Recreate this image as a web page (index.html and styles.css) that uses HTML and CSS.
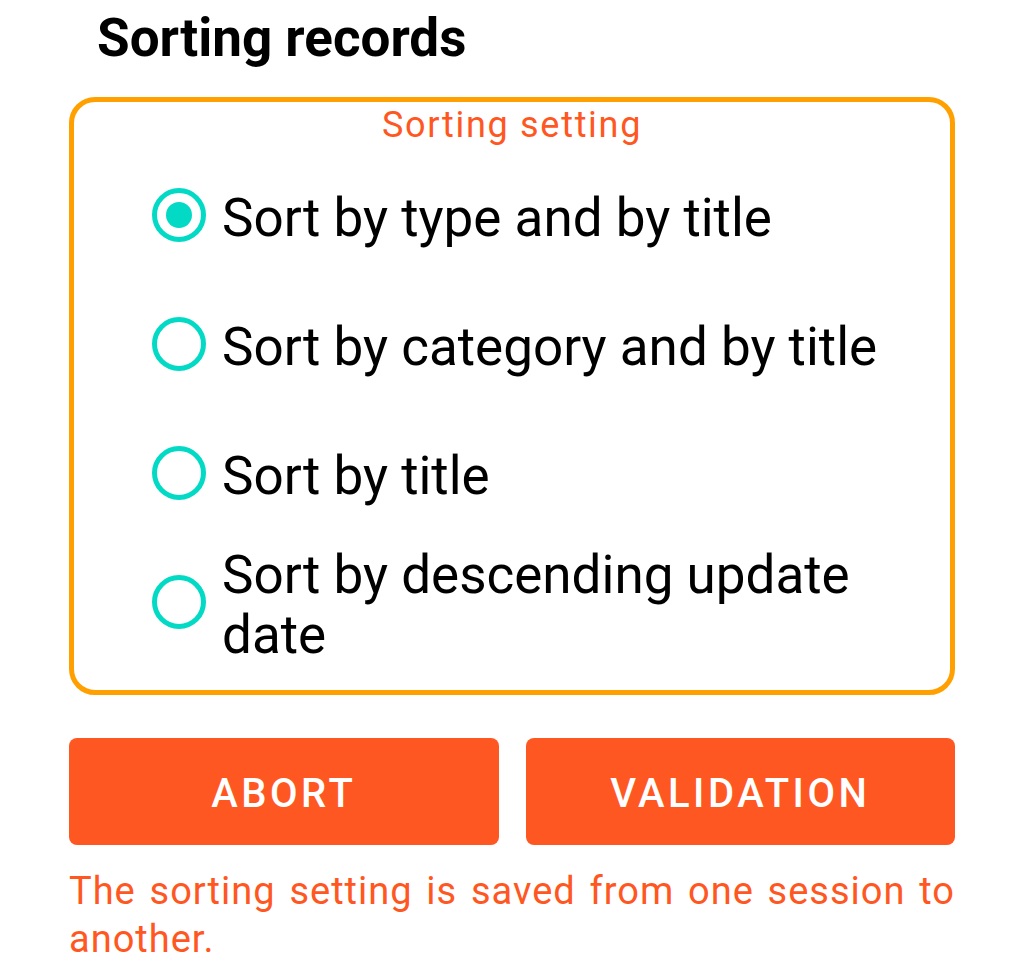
FILE: index.html
```html
<!DOCTYPE html>
<html lang="en">

<head>
    <meta charset="UTF-8">
    <meta name="viewport" content="width=device-width, initial-scale=1.0">
    <title>Sorting records</title>
    <link rel="stylesheet" href="styles.css">
</head>

<body>

    <div class="dialog">
        <h2 class="dialog-title">Sorting records</h2>

        <div class="sort-box">
            <div class="sort-heading">Sorting setting</div>

            <div class="sort-list">
                <label class="sort-option">
                    <input type="radio" name="sortMode" value="type" checked>
                    <span class="radio-mark"></span>
                    <span class="option-text">Sort by type and by title</span>
                </label>

                <label class="sort-option">
                    <input type="radio" name="sortMode" value="category">
                    <span class="radio-mark"></span>
                    <span class="option-text">Sort by category and by title</span>
                </label>

                <label class="sort-option">
                    <input type="radio" name="sortMode" value="title">
                    <span class="radio-mark"></span>
                    <span class="option-text">Sort by title</span>
                </label>

                <label class="sort-option">
                    <input type="radio" name="sortMode" value="date">
                    <span class="radio-mark"></span>
                    <span class="option-text">Sort by descending update date</span>
                </label>
            </div>
        </div>

        <div class="actions">
            <button class="action-btn">Abort</button>
            <button class="action-btn">Validation</button>
        </div>

        <p class="note">The sorting setting is saved from one session to another.</p>
    </div>

</body>

</html>
```

FILE: styles.css
```css
body {
    font-family: Roboto, "Noto Sans", Arial, sans-serif;
    margin: 0;
    padding: 0;
    background-color: #fff;
    color: #000;
}

.dialog {
    padding: 0 69px;
}

.dialog-title {
    font-size: 53px;
    font-weight: 700;
    margin: 0;
    padding: 6px 0 0 28px;
    line-height: 64px;
}

.sort-box {
    border: 5px solid #ffa000;
    border-radius: 26px;
    margin-top: 27px;
    padding: 0 20px 24px 78px;
}

.sort-heading {
    text-align: center;
    color: #ff5722;
    font-size: 36px;
    letter-spacing: 1.7px;
    line-height: 46px;
    margin-left: -78px;
    margin-right: -20px;
}

.sort-list {
    display: flex;
    flex-direction: column;
    margin-top: 2px;
}

.sort-option {
    display: flex;
    align-items: center;
    min-height: 129px;
    cursor: pointer;
}

.sort-option input {
    display: none;
}

.radio-mark {
    flex: none;
    width: 44px;
    height: 44px;
    border: 5px solid #03dac5;
    border-radius: 50%;
    margin-right: 16px;
    position: relative;
}

/* filled dot for the selected option */
.sort-option input:checked + .radio-mark::after {
    content: "";
    position: absolute;
    left: 9px;
    top: 9px;
    width: 26px;
    height: 26px;
    border-radius: 50%;
    background-color: #03dac5;
}

.option-text {
    font-size: 53px;
    line-height: 60px;
    padding-top: 6px;
}

.actions {
    display: flex;
    gap: 27px;
    margin-top: 43px;
}

.action-btn {
    flex: 1;
    height: 107px;
    padding-top: 4px;
    border: none;
    border-radius: 8px;
    background-color: #ff5722;
    color: #fff;
    font-family: inherit;
    font-size: 40px;
    font-weight: 500;
    letter-spacing: 3.5px;
    text-transform: uppercase;
    cursor: pointer;
}

.note {
    margin: 22px 0 0;
    color: #ff5722;
    font-size: 38px;
    line-height: 48px;
    text-align: justify;
    letter-spacing: 1px;
}
```
